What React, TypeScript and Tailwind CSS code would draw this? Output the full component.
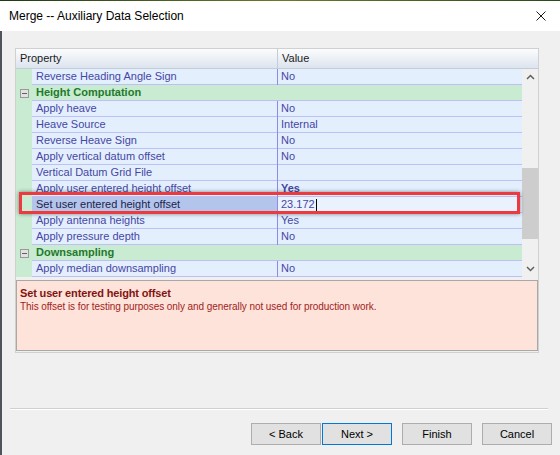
type Row =
  | { kind: "group"; label: string }
  | { kind: "prop"; label: string; value: string; bold?: boolean; selected?: boolean };

const rows: Row[] = [
  { kind: "prop", label: "Reverse Heading Angle Sign", value: "No" },
  { kind: "group", label: "Height Computation" },
  { kind: "prop", label: "Apply heave", value: "No" },
  { kind: "prop", label: "Heave Source", value: "Internal" },
  { kind: "prop", label: "Reverse Heave Sign", value: "No" },
  { kind: "prop", label: "Apply vertical datum offset", value: "No" },
  { kind: "prop", label: "Vertical Datum Grid File", value: "" },
  { kind: "prop", label: "Apply user entered height offset", value: "Yes", bold: true },
  { kind: "prop", label: "Set user entered height offset", value: "23.172", selected: true },
  { kind: "prop", label: "Apply antenna heights", value: "Yes" },
  { kind: "prop", label: "Apply pressure depth", value: "No" },
  { kind: "group", label: "Downsampling" },
  { kind: "prop", label: "Apply median downsampling", value: "No" },
];

function Chevron({ up }: { up?: boolean }) {
  return (
    <svg width="9" height="6" viewBox="0 0 9 6">
      <path
        d={up ? "M1 5 L4.5 1.5 L8 5" : "M1 1 L4.5 4.5 L8 1"}
        fill="none"
        stroke="#606060"
        strokeWidth="1.5"
      />
    </svg>
  );
}

function GridRow({ row }: { row: Row }) {
  if (row.kind === "group") {
    return (
      <div className="flex h-[16px] bg-[#c8ebd2]">
        <div className="w-[16px] flex items-center justify-center">
          <div className="w-[9px] h-[9px] border border-[#9a9a9a] bg-[#e2e2e2] flex items-center justify-center">
            <div className="w-[5px] h-[1px] bg-[#606060]" />
          </div>
        </div>
        <div className="flex-1 border-b border-[#bcc0f4] pl-[4px] text-[11px] leading-[15px] font-bold text-[#1f7a2a]">
          {row.label}
        </div>
      </div>
    );
  }

  return (
    <div className="flex h-[16px]">
      <div className="w-[16px] bg-[#c8ebd2]" />
      <div
        className={`w-[245px] border-b border-[#bcc0f4] pl-[4px] text-[11px] leading-[15px] ${
          row.selected ? "bg-[#b3c5ea] text-[#1e1e50]" : "bg-[#e3effc] text-[#4646a6]"
        }`}
      >
        {row.label}
      </div>
      <div className="w-[1px] bg-[#8c8ce8]" />
      <div
        className={`flex-1 border-b border-[#bcc0f4] pl-[3px] text-[11px] leading-[15px] flex items-center ${
          row.selected ? "bg-[#eaf2fd] text-[#4646a6]" : "bg-[#e3effc] text-[#4646a6]"
        } ${row.bold ? "font-bold" : ""}`}
      >
        {row.value}
        {row.selected && <span className="ml-[1px] w-[1px] h-[12px] bg-black" />}
      </div>
    </div>
  );
}

export default function App() {
  return (
    <div className="w-[560px] h-[455px] flex flex-col overflow-hidden font-['Liberation_Sans',Arial,sans-serif]">
      <div className="h-[1px] bg-gradient-to-r from-[#1d3a14] via-[#6a7a2a] to-[#2a4a1a]" />

      <div className="h-[30px] bg-white flex items-center justify-between pl-[9px] pr-[14px]">
        <span className="text-[12px] text-black">Merge -- Auxiliary Data Selection</span>
        <svg width="10" height="10" viewBox="0 0 10 10">
          <path d="M0.5 0.5 L9.5 9.5 M9.5 0.5 L0.5 9.5" stroke="#1a1a1a" strokeWidth="1" />
        </svg>
      </div>

      <div className="flex-1 bg-[#f0f0f0] border-l-2 border-[#50555c] flex flex-col">
        <div className="mt-[17px] ml-[13px] w-[524px] h-[305px] border border-[#d0d0d0] bg-[#f0f0f0] flex flex-col">
          <div className="h-[20px] flex bg-gradient-to-b from-[#fbfcfd] to-[#dde4ee] border-b border-[#c4ccd8] text-[11px] text-[#1a1a1a] leading-[19px]">
            <div className="w-[261px] pl-[4px]">Property</div>
            <div className="w-[1px] bg-[#c4ccd8]" />
            <div className="flex-1 pl-[4px]">Value</div>
          </div>

          <div className="flex h-[208px]">
            <div className="relative w-[506px]">
              {rows.map((row, i) => (
                <GridRow key={i} row={row} />
              ))}
              <div className="absolute left-[3px] top-[123px] w-[501px] h-[22px] border-[3px] border-[#ec3a40] shadow-[0_0_4px_rgba(0,0,0,0.45)]" />
            </div>
            <div className="flex-1 bg-[#f0f0f0] flex flex-col items-center">
              <div className="h-[16px] flex items-center">
                <Chevron up />
              </div>
              <div className="mt-[83px] w-full h-[71px] bg-[#cdcdcd]" />
              <div className="mt-auto h-[16px] flex items-center">
                <Chevron />
              </div>
            </div>
          </div>

          <div className="mt-[3px] h-[71px] border border-[#a8a8a8] bg-[#fde3d9] pl-[3px] pt-[5px]">
            <div className="text-[11px] leading-[14px] font-bold tracking-[-0.15px] text-[#821313]">
              Set user entered height offset
            </div>
            <div className="text-[10px] leading-[13px] tracking-[-0.07px] text-[#a31d1d]">
              This offset is for testing purposes only and generally not used for production work.
            </div>
          </div>
        </div>

        <div className="mt-[55px] ml-[8px] w-[538px] border-t border-[#d0d0d0] border-b border-b-white" />

        <div className="mt-[13px] pl-[249px] flex">
          <button className="w-[70px] h-[22px] bg-[#e1e1e1] border border-[#adadad] text-[11px] text-black">
            &lt; Back
          </button>
          <button className="ml-[1px] w-[70px] h-[22px] bg-[#e1e1e1] border border-[#0078d7] text-[11px] text-black">
            Next &gt;
          </button>
          <button className="ml-[10px] w-[70px] h-[22px] bg-[#e1e1e1] border border-[#adadad] text-[11px] text-black">
            Finish
          </button>
          <button className="ml-[10px] w-[70px] h-[22px] bg-[#e1e1e1] border border-[#adadad] text-[11px] text-black">
            Cancel
          </button>
        </div>
      </div>
    </div>
  );
}
